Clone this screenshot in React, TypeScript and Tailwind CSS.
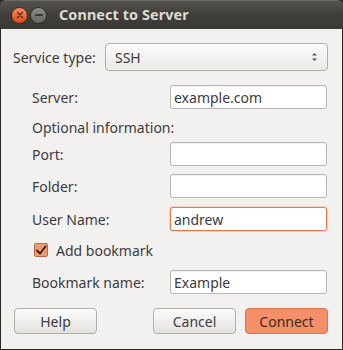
import React from "react";

const font = { fontFamily: '"Noto Sans", "Liberation Sans", sans-serif' };

function Input({ value, focused }: { value?: string; focused?: boolean }) {
  return (
    <div
      className={
        "w-[157px] h-[24px] rounded-[3px] bg-white flex items-center pl-[3px] text-[14px] text-[#3c3c3c] " +
        (focused
          ? "border border-[#e4784b] shadow-[0_0_0_1px_rgba(240,150,110,0.3)]"
          : "border border-[#b9b6b0] shadow-[inset_0_1px_1px_rgba(0,0,0,0.06)]")
      }
    >
      {value}
    </div>
  );
}

function Row({ label, children, className }: { label: string; children: React.ReactNode; className?: string }) {
  return (
    <div className={"flex items-center justify-between pl-[31px] pr-[15px] " + (className || "")}>
      <span className="text-[14px] text-[#3c3c3c]">{label}</span>
      {children}
    </div>
  );
}

function PrimaryButton({ label }: { label: string }) {
  return (
    <div className="ml-[9px] h-[26px] w-[83px] rounded-[4px] flex items-center justify-center text-[14px] border border-[#d87550] bg-[#f48f69] text-[#3a2a24]">
      {label}
    </div>
  );
}

function Button({ label }: { label: string }) {
  return (
    <div className="h-[26px] w-[83px] rounded-[4px] flex items-center justify-center text-[14px] border border-[#b0aea8] bg-gradient-to-b from-[#fbfbfa] to-[#e5e3e0] text-[#3c3c3c]">
      {label}
    </div>
  );
}

export default function App() {
  return (
    <div style={font} className="w-[343px] h-[350px] bg-[#2b2a27] overflow-hidden">
      <div className="w-[343px] h-[350px] flex flex-col">
        {/* Title bar */}
        <div className="h-[29px] rounded-t-[6px] bg-gradient-to-b from-[#55534c] via-[#3f3e3a] to-[#3a3935] border-t border-[#6a6862] flex items-center relative">
          <div className="ml-[11px] w-[17px] h-[17px] rounded-full bg-gradient-to-b from-[#f58a5c] to-[#dd4a19] border border-[#4a2a1c] flex items-center justify-center">
            <svg width="8" height="8" viewBox="0 0 8 8">
              <path d="M1.5 1.5 L6.5 6.5 M6.5 1.5 L1.5 6.5" stroke="#5a2412" strokeWidth="1.4" strokeLinecap="round" />
            </svg>
          </div>
          <div className="ml-[2px] w-[17px] h-[17px] rounded-full bg-gradient-to-b from-[#8e8d88] to-[#66655f] border border-[#2e2d2a] flex items-center justify-center">
            <div className="w-[8px] h-[2px] bg-[#3a3935] rounded-sm" />
          </div>
          <span className="ml-[12px] text-[14.4px] font-bold text-[#dfdbd2] tracking-[0.1px]">Connect to Server</span>
        </div>

        {/* Body */}
        <div className="flex-1 bg-[#f2f1f0] mx-[1px] mb-[1px] flex flex-col">
          <div className="flex items-center mt-[14px] pl-[12px] pr-[14px] justify-between">
            <span className="text-[14px] text-[#3c3c3c]">Service type:</span>
            <div className="w-[223px] h-[28px] rounded-[4px] border border-[#b0aea8] bg-gradient-to-b from-[#fbfbfa] to-[#eceae7] flex items-center justify-between pl-[9px] pr-[9px] text-[14px] text-[#3c3c3c]">
              <span>SSH</span>
              <svg width="7" height="12" viewBox="0 0 7 12">
                <path d="M1 4.5 L3.5 2 L6 4.5 Z" fill="#555" />
                <path d="M1 7.5 L3.5 10 L6 7.5 Z" fill="#555" />
              </svg>
            </div>
          </div>

          <Row label="Server:" className="mt-[14px]">
            <Input value="example.com" />
          </Row>

          <div className="h-[33px] pt-[3px] flex items-center pl-[31px] text-[14px] text-[#3c3c3c]">Optional information:</div>

          <Row label="Port:">
            <Input />
          </Row>
          <Row label="Folder:" className="mt-[8px]">
            <Input />
          </Row>
          <Row label="User Name:" className="mt-[9px]">
            <Input value="andrew" focused />
          </Row>

          <div className="flex items-center pl-[33px] mt-[12px] h-[14px]">
            <div className="w-[14px] h-[14px] rounded-[2px] bg-[#ee9a74] border border-[#c0663f] flex items-center justify-center">
              <svg width="12" height="11" viewBox="0 0 12 11">
                <path d="M2 5.5 L5 8.5 L10.5 1.5" stroke="#3d1a0d" strokeWidth="1.8" fill="none" strokeLinecap="round" strokeLinejoin="round" />
              </svg>
            </div>
            <span className="ml-[8px] text-[14px] text-[#3c3c3c]">Add bookmark</span>
          </div>

          <Row label="Bookmark name:" className="mt-[13px]">
            <Input value="Example" />
          </Row>

          <div className="flex items-center mt-[14px] pl-[13px] pr-[14px]">
            <Button label="Help" />
            <div className="flex-1" />
            <Button label="Cancel" />
            <PrimaryButton label="Connect" />
          </div>
        </div>
      </div>
    </div>
  );
}
